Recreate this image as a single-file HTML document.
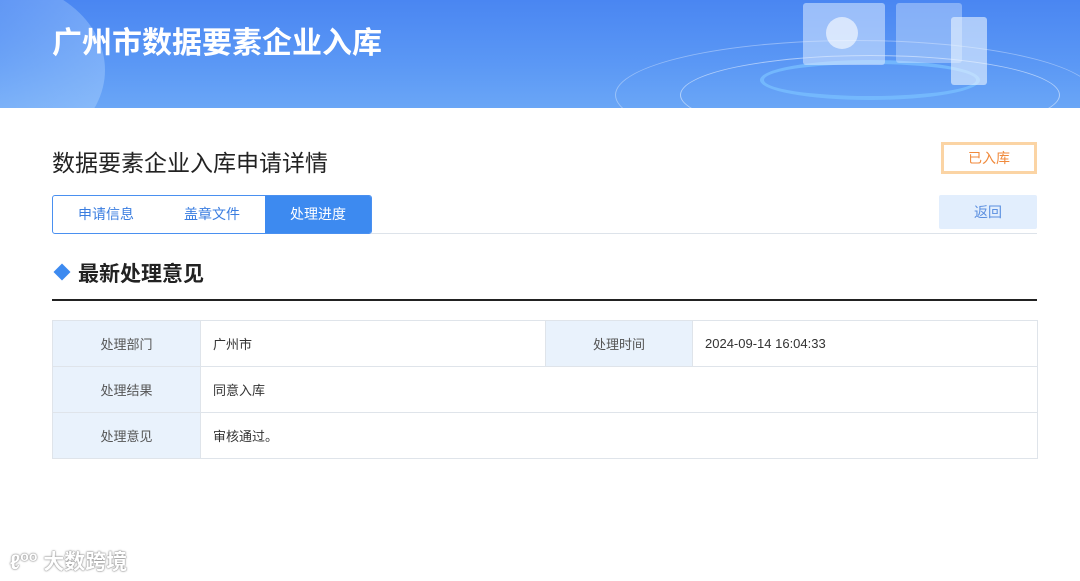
<!DOCTYPE html>
<html><head><meta charset="utf-8"><style>
*{margin:0;padding:0;box-sizing:border-box}
body{width:1080px;height:581px;background:#fff;font-family:"Liberation Sans","Noto Sans CJK SC",sans-serif;position:relative;overflow:hidden}
.hdr{position:absolute;left:0;top:0;width:1080px;height:108px;background:linear-gradient(180deg,#4a86f2 0%,#5b98f5 60%,#6aa6f6 100%);overflow:hidden}
.hdr h1{position:absolute;left:52px;top:18px;color:#fff;font-size:30px;font-weight:bold;letter-spacing:0}
.orb{position:absolute;left:-120px;top:-20px;width:225px;height:180px;border-radius:50%;background:radial-gradient(circle at 30% 40%,rgba(255,255,255,.05),rgba(180,215,255,.45));}
.ring{position:absolute;border-radius:50%;border:1px solid rgba(255,255,255,.35)}
.title{position:absolute;left:52px;top:144px;font-size:23px;color:#222}
.tag{position:absolute;left:941px;top:142px;width:96px;height:32px;border:3px solid #fbd4a4;color:#f08a3c;font-size:14px;text-align:center;line-height:26px}
.back{position:absolute;left:939px;top:195px;width:98px;height:34px;background:#e2eefd;color:#5b8fe0;font-size:14px;text-align:center;line-height:34px;border-radius:2px}
.tabs{position:absolute;left:52px;top:195px;height:39px;display:flex;border:1px solid #4a90f0;border-radius:3px;overflow:hidden}
.tabs div{width:106px;text-align:center;line-height:37px;font-size:14px;color:#3a7de0}
.tabs .on{background:#3d8af0;color:#fff}
.tl{position:absolute;left:371px;top:233px;width:666px;height:1px;background:#dde3ea}
.sec{position:absolute;left:52px;top:258px;font-size:21px;font-weight:bold;color:#222}
.sec i{display:inline-block;width:12px;height:12px;background:#3d8af0;transform:rotate(45deg);margin:0 10px 3px 4px}
.bar{position:absolute;left:52px;top:299px;width:985px;height:2px;background:#222}
table{position:absolute;left:52px;top:320px;width:986px;border-collapse:collapse;font-size:13px;color:#333;table-layout:fixed}
td{border:1px solid #dfe4ea;height:46px;padding:0 12px}
td.l{background:#e9f2fc;text-align:center;color:#555}
.wm{position:absolute;left:10px;top:546px;color:#fff;font-size:21px;font-weight:bold;text-shadow:0 0 2px #888,0 0 1px #666}
</style></head><body>
<div class="hdr">
<div class="orb"></div>
<div class="ring" style="left:615px;top:40px;width:480px;height:110px"></div>
<div class="ring" style="left:680px;top:55px;width:380px;height:80px;border-color:rgba(255,255,255,.5)"></div>
<div class="ring" style="left:760px;top:60px;width:220px;height:40px;border:4px solid rgba(120,190,255,.8)"></div>
<div style="position:absolute;left:803px;top:3px;width:82px;height:62px;background:rgba(220,235,255,.55);border-radius:3px"></div>
<div style="position:absolute;left:826px;top:17px;width:32px;height:32px;border-radius:50%;background:rgba(255,255,255,.6)"></div>
<div style="position:absolute;left:896px;top:3px;width:66px;height:60px;background:rgba(220,235,255,.4);border-radius:3px"></div>
<div style="position:absolute;left:951px;top:17px;width:36px;height:68px;background:rgba(235,245,255,.6);border-radius:3px"></div>
<h1>广州市数据要素企业入库</h1>
</div>
<div class="title">数据要素企业入库申请详情</div>
<div class="tag">已入库</div>
<div class="tabs"><div>申请信息</div><div>盖章文件</div><div class="on">处理进度</div></div>
<div class="back">返回</div>
<div class="tl"></div>
<div class="sec"><i></i>最新处理意见</div>
<div class="bar"></div>
<table>
<colgroup><col style="width:148px"><col style="width:345px"><col style="width:147px"><col></colgroup>
<tr><td class="l">处理部门</td><td>广州市</td><td class="l">处理时间</td><td>2024-09-14 16:04:33</td></tr>
<tr><td class="l">处理结果</td><td colspan="3">同意入库</td></tr>
<tr><td class="l">处理意见</td><td colspan="3">审核通过。</td></tr>
</table>
<div class="wm">ℓ<span style="font-size:14px;vertical-align:8px">oo</span> 大数跨境</div>
</body></html>
